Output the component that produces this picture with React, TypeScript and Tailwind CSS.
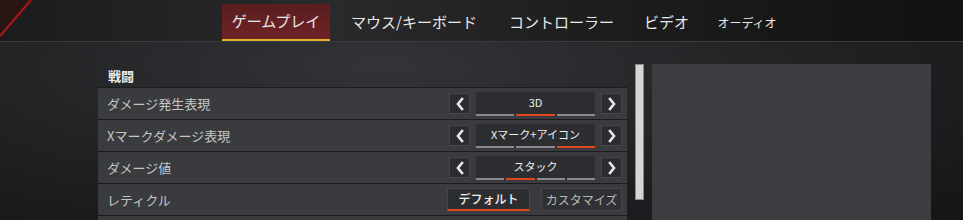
import React from "react";

const font = { fontFamily: '"Noto Sans CJK JP", "Noto Sans", sans-serif' };

const tabs = [
  { label: "ゲームプレイ", active: true, w: "w-[108px]" },
  { label: "マウス/キーボード", w: "w-[168px]" },
  { label: "コントローラー", w: "w-[127px]" },
  { label: "ビデオ", w: "w-[83px]" },
  { label: "オーディオ", w: "w-[78px]", small: true },
];

function Arrow({ dir }: { dir: "left" | "right" }) {
  return (
    <div className="flex h-[21px] w-[21px] items-center justify-center border border-[#46474a] bg-[#2c2d30]">
      <svg width="10" height="14" viewBox="0 0 10 14">
        <polyline
          points={dir === "left" ? "7,2 3,7 7,12" : "3,2 7,7 3,12"}
          fill="none"
          stroke="#e6e6e6"
          strokeWidth="2.6"
          strokeLinecap="square"
        />
      </svg>
    </div>
  );
}

function Selector({ value, count, active }: { value: string; count: number; active: number }) {
  return (
    <div className="flex items-center gap-[6px]">
      <Arrow dir="left" />
      <div className="flex h-[24px] w-[119px] flex-col bg-[#2d2e31]">
        <div className="flex flex-1 items-center justify-center text-[11px] text-[#f0f0f0]">{value}</div>
        <div className="flex gap-[2px]">
          {Array.from({ length: count }).map((_, i) => (
            <div key={i} className={`h-[2px] flex-1 ${i === active ? "bg-[#e0461c]" : "bg-[#8a8b8d]"}`} />
          ))}
        </div>
      </div>
      <Arrow dir="right" />
    </div>
  );
}

function Row({ label, children }: { label: string; children: React.ReactNode }) {
  return (
    <div className="flex h-[32px] items-center justify-between border-t border-[#1b1c1e] bg-[#3a3b3e] pl-[9px] pr-[5px]">
      <span className="text-[13px] text-[#c6c6c6]">{label}</span>
      {children}
    </div>
  );
}

export default function App() {
  return (
    <div
      className="relative h-[220px] w-[963px] overflow-hidden bg-[radial-gradient(ellipse_at_40%_30%,#333437_0%,#232426_45%,#151516_100%)]"
      style={font}
    >
      {/* header */}
      <div className="relative flex h-[42px] border-b border-[#3a3b3d] bg-[linear-gradient(90deg,#1c1c1d_0%,#2a2a2c_35%,#1e1e1f_60%,#111112_100%)]">
        <svg className="absolute left-0 top-0" width="40" height="42" viewBox="0 0 40 42">
          <polygon points="0,0 32,0 0,38" fill="#2a1515" />
          <line x1="31" y1="0" x2="0" y2="36" stroke="#b0171b" strokeWidth="2" />
        </svg>
        <div className="ml-[222px] flex items-end">
          {tabs.map((t) => (
            <div
              key={t.label}
              className={`flex h-[37px] ${t.w} items-center justify-center ${
                t.active
                  ? "border-b-2 border-[#e0b22a] bg-[linear-gradient(180deg,#5a1d1f_0%,#6f2326_100%)]"
                  : ""
              }`}
            >
              <span className={`${t.small ? "text-[12px]" : "text-[15px]"} text-[#e8e8e8]`}>{t.label}</span>
            </div>
          ))}
        </div>
      </div>

      {/* body */}
      <div className="flex pl-[98px] pt-[22px]">
        <div className="w-[529px]">
          <div className="flex h-[23px] items-end pb-[2px] pl-[10px] text-[13px] font-bold text-[#ededed]">戦闘</div>
          <div className="border-b border-[#1b1c1e]">
            <Row label="ダメージ発生表現">
              <Selector value="3D" count={3} active={1} />
            </Row>
            <Row label="Xマークダメージ表現">
              <Selector value="Xマーク+アイコン" count={3} active={2} />
            </Row>
            <Row label="ダメージ値">
              <Selector value="スタック" count={4} active={1} />
            </Row>
            <Row label="レティクル">
              <div className="flex gap-[11px]">
                <div className="flex h-[23px] w-[83px] items-center justify-center border border-[#46474a] border-b-2 border-b-[#e0461c] bg-[#2c2d30] text-[12px] font-medium text-[#f0f0f0]">
                  デフォルト
                </div>
                <div className="flex h-[23px] w-[81px] items-center justify-center border border-[#46474a] bg-[#303134] text-[12px] text-[#b8b8b8]">
                  カスタマイズ
                </div>
              </div>
            </Row>
            <Row label="">
              <span />
            </Row>
          </div>
        </div>
        <div className="ml-[8px] mt-[0px] h-[136px] w-[9px] border border-[#8a8a8a] bg-[#d6d6d6]" />
        <div className="ml-[8px] h-[200px] w-[279px] bg-[#3c3d40]" />
      </div>
    </div>
  );
}
